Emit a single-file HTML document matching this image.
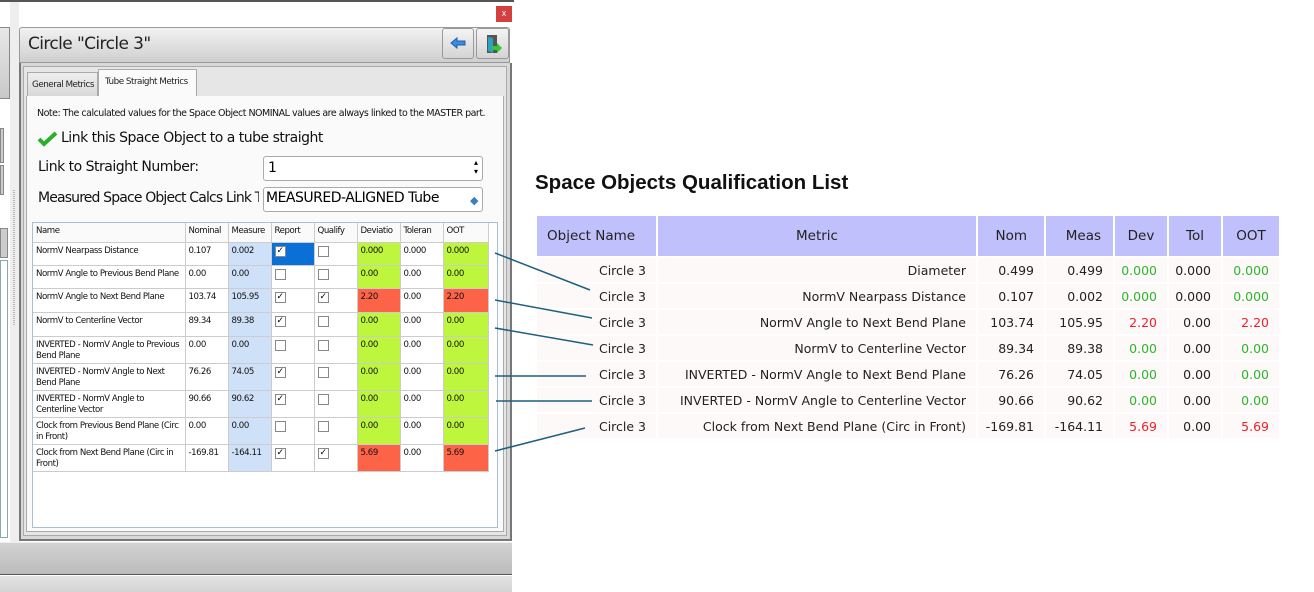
<!DOCTYPE html>
<html><head><meta charset="utf-8"><style>
*{margin:0;padding:0;box-sizing:border-box}
body{width:1314px;height:592px;background:#fff;position:relative;overflow:hidden;font-family:"Liberation Sans",sans-serif}
.a{position:absolute}
.t{font-family:"DejaVu Sans",sans-serif;font-size:9.5px;color:#111;letter-spacing:-0.5px;white-space:nowrap}
.g td{border-right:1px solid #ccc;border-bottom:1px solid #ccc;padding:3px 2px 0 3px;vertical-align:top;font-family:"DejaVu Sans",sans-serif;font-size:8.6px;letter-spacing:-0.45px;line-height:11px;color:#111;overflow:hidden}
.g tr.s td{white-space:nowrap}
.cb{display:inline-block;width:11px;height:11px;border:1px solid #888;background:#fff;font-size:9px;line-height:9px;text-align:center;color:#000}
.q td{font-family:"DejaVu Sans",sans-serif;font-size:12.5px;color:#222;text-align:right;padding:0 10px 0 0;background:#fdf9f9;height:24px}
.q th{font-family:"DejaVu Sans",sans-serif;font-size:13.5px;font-weight:normal;color:#222;background:#c0c0fc;height:40px}
.gr{color:#2db52d!important}.rd{color:#f0202a!important}
</style></head><body>
<div class="a" style="left:0;top:0;width:514px;height:2px;background:#555"></div>
<div class="a" style="left:496px;top:6px;width:16px;height:16px;background:#d24040;color:#fff;font-size:9px;text-align:center;line-height:15px">x</div>
<div class="a" style="left:0;top:27px;width:10px;height:72px;background:linear-gradient(#e8e8e8,#c8c8c8);border:1px solid #888;border-left:none"></div>
<div class="a" style="left:0;top:128px;width:4px;height:35px;background:#ccc;border:1px solid #888"></div>
<div class="a" style="left:0;top:165px;width:4px;height:30px;background:#ccc;border:1px solid #888"></div>
<div class="a" style="left:0;top:228px;width:8px;height:30px;background:#ccc;border:1px solid #888"></div>
<div class="a" style="left:0;top:260px;width:8px;height:278px;background:#fff;border:1px solid #8aa"></div>
<div class="a" style="left:10px;top:2px;width:9px;height:540px;background:#eee"></div>
<div class="a" style="left:13px;top:190px;width:2px;height:135px;background:repeating-linear-gradient(#bbb 0 1px,#eee 1px 2px)"></div>
<div class="a" style="left:19px;top:27px;width:491px;height:36px;background:linear-gradient(#f2f2f2,#cfcfcf);border:1px solid #999;border-radius:3px 3px 0 0"></div>
<div class="a" style="left:28px;top:34px;font-size:17px;color:#222;font-family:'DejaVu Sans',sans-serif;letter-spacing:-0.6px">Circle "Circle 3"</div>
<div class="a" style="left:442px;top:28px;width:32px;height:31px;background:linear-gradient(#f4f4f4,#d4d4d4);border:1px solid #999;border-radius:3px"><svg width="30" height="29"><path d="M8 14 L14 9 L14 12 L22 12 L22 16 L14 16 L14 19 Z" fill="#3a8ee0" stroke="#1f5fa8"/></svg></div>
<div class="a" style="left:476px;top:28px;width:33px;height:31px;background:linear-gradient(#f4f4f4,#d4d4d4);border:1px solid #999;border-radius:3px"><svg width="31" height="29"><path d="M10 6 L20 6 L20 24 L10 24 Z" fill="#555"/><path d="M11 8 L16 9 L16 24 L11 22 Z" fill="#2aa3c0"/><path d="M15 17 L20 17 L20 14 L25 19 L20 24 L20 21 L15 21Z" fill="#3ac43a"/></svg></div>
<div class="a" style="left:19px;top:63px;width:493px;height:478px;background:#d8d8d8;border:2px solid #777;border-top:none"></div>
<div class="a" style="left:23px;top:66px;width:484px;height:470px;background:#e6e6e6;border:1px solid #aaa"></div>
<div class="a" style="left:27px;top:72px;width:71px;height:24px;background:linear-gradient(#eee,#d8d8d8);border:1px solid #aaa;border-bottom:none;font-size:8.8px;letter-spacing:-0.5px;padding:7px 0 0 4px;font-family:'DejaVu Sans',sans-serif;color:#222;white-space:nowrap;overflow:hidden">General Metrics</div>
<div class="a" style="left:98px;top:69px;width:99px;height:27px;background:#fafafa;border:1px solid #aaa;border-bottom:none;font-size:8.8px;letter-spacing:-0.5px;padding:7px 0 0 6px;font-family:'DejaVu Sans',sans-serif;color:#222;white-space:nowrap;overflow:hidden">Tube Straight Metrics</div>
<div class="a" style="left:26px;top:96px;width:478px;height:436px;background:#fafafa;border:1px solid #aaa;border-top:none"></div>
<div class="a t" style="left:37px;top:108px">Note: The calculated values for the Space Object NOMINAL values are always linked to the MASTER part.</div>
<svg class="a" style="left:37px;top:131px" width="22" height="16"><path d="M2 8 L7 13 L19 2" stroke="#2ab02a" stroke-width="4" fill="none"/></svg>
<div class="a" style="left:61px;top:130px;font-size:14px;color:#111;font-family:'DejaVu Sans',sans-serif;letter-spacing:-0.5px">Link this Space Object to a tube straight</div>
<div class="a" style="left:38px;top:159px;font-size:14px;color:#111;font-family:'DejaVu Sans',sans-serif;letter-spacing:-0.5px">Link to Straight Number:</div>
<div class="a" style="left:263px;top:156px;width:220px;height:25px;background:#fff;border:1px solid #aaa;border-radius:3px;font-size:14px;padding:3px 4px;font-family:'DejaVu Sans',sans-serif">1<span style="position:absolute;right:4px;top:1px;font-size:8px;line-height:9px">▴<br>▾</span></div>
<div class="a" style="left:38px;top:190px;width:221px;overflow:hidden;white-space:nowrap;font-size:14px;color:#111;font-family:'DejaVu Sans',sans-serif;letter-spacing:-0.85px">Measured Space Object Calcs Link To</div>
<div class="a" style="left:263px;top:187px;width:220px;height:25px;background:#fff;border:1px solid #aaa;border-radius:3px;font-size:14px;padding:2px 2px;font-family:'DejaVu Sans',sans-serif;letter-spacing:-0.5px">MEASURED-ALIGNED Tube<span style="position:absolute;right:4px;top:6px;color:#3a7fc0;font-size:11px">◆</span></div>
<div class="a" style="left:32px;top:222px;width:466px;height:306px;background:#fff;border:1px solid #a9bfd6"></div>
<table class="a g" style="left:33px;top:223px;border-collapse:collapse;table-layout:fixed;width:455px">
<colgroup><col style="width:152px"><col style="width:43px"><col style="width:43px"><col style="width:43px"><col style="width:43px"><col style="width:43px"><col style="width:43px"><col style="width:45px"></colgroup>
<tr class="s" style="height:19px;background:#fafafa"><td>Name</td><td>Nominal</td><td>Measure</td><td>Report</td><td>Qualify</td><td>Deviatio</td><td>Toleran</td><td>OOT</td></tr>
<tr class="s" style="height:23px"><td>NormV Nearpass Distance</td><td>0.107</td><td style="background:#cfe1f8">0.002</td><td style="background:#0a6fd6"><span class="cb">✓</span></td><td><span class="cb"></span></td><td style="background:#bdf63c">0.000</td><td>0.000</td><td style="background:#bdf63c">0.000</td></tr>
<tr class="s" style="height:23px"><td>NormV Angle to Previous Bend Plane</td><td>0.00</td><td style="background:#cfe1f8">0.00</td><td><span class="cb"></span></td><td><span class="cb"></span></td><td style="background:#bdf63c">0.00</td><td>0.00</td><td style="background:#bdf63c">0.00</td></tr>
<tr class="s" style="height:24px"><td>NormV Angle to Next Bend Plane</td><td>103.74</td><td style="background:#cfe1f8">105.95</td><td><span class="cb">✓</span></td><td><span class="cb">✓</span></td><td style="background:#fd6347">2.20</td><td>0.00</td><td style="background:#fd6347">2.20</td></tr>
<tr class="s" style="height:24px"><td>NormV to Centerline Vector</td><td>89.34</td><td style="background:#cfe1f8">89.38</td><td><span class="cb">✓</span></td><td><span class="cb"></span></td><td style="background:#bdf63c">0.00</td><td>0.00</td><td style="background:#bdf63c">0.00</td></tr>
<tr style="height:27px"><td>INVERTED - NormV Angle to Previous Bend Plane</td><td>0.00</td><td style="background:#cfe1f8">0.00</td><td><span class="cb"></span></td><td><span class="cb"></span></td><td style="background:#bdf63c">0.00</td><td>0.00</td><td style="background:#bdf63c">0.00</td></tr>
<tr style="height:27px"><td>INVERTED - NormV Angle to Next Bend Plane</td><td>76.26</td><td style="background:#cfe1f8">74.05</td><td><span class="cb">✓</span></td><td><span class="cb"></span></td><td style="background:#bdf63c">0.00</td><td>0.00</td><td style="background:#bdf63c">0.00</td></tr>
<tr style="height:27px"><td>INVERTED - NormV Angle to Centerline Vector</td><td>90.66</td><td style="background:#cfe1f8">90.62</td><td><span class="cb">✓</span></td><td><span class="cb"></span></td><td style="background:#bdf63c">0.00</td><td>0.00</td><td style="background:#bdf63c">0.00</td></tr>
<tr style="height:27px"><td>Clock from Previous Bend Plane (Circ in Front)</td><td>0.00</td><td style="background:#cfe1f8">0.00</td><td><span class="cb"></span></td><td><span class="cb"></span></td><td style="background:#bdf63c">0.00</td><td>0.00</td><td style="background:#bdf63c">0.00</td></tr>
<tr style="height:27px"><td>Clock from Next Bend Plane (Circ in Front)</td><td>-169.81</td><td style="background:#cfe1f8">-164.11</td><td><span class="cb">✓</span></td><td><span class="cb">✓</span></td><td style="background:#fd6347">5.69</td><td>0.00</td><td style="background:#fd6347">5.69</td></tr>
</table>
<div class="a" style="left:0;top:542px;width:512px;height:33px;background:linear-gradient(#d2d2d2,#bcbcbc);border-top:1px solid #eee;border-bottom:1px solid #555"></div>
<div class="a" style="left:0;top:576px;width:512px;height:16px;background:linear-gradient(#e4e4e4,#d4d4d4)"></div>
<div class="a" style="left:535px;top:171px;font-size:20.5px;font-weight:bold;color:#111">Space Objects Qualification List</div>
<table class="a q" style="left:535px;top:214px;border-collapse:separate;border-spacing:2px;table-layout:fixed">
<colgroup><col style="width:119px"><col style="width:318px"><col style="width:66px"><col style="width:67px"><col style="width:52px"><col style="width:52px"><col style="width:56px"></colgroup>
<tr><th style="text-align:left;padding-left:10px">Object Name</th><th>Metric</th><th style="text-align:right;padding-right:17px">Nom</th><th style="text-align:right;padding-right:12px">Meas</th><th>Dev</th><th>Tol</th><th>OOT</th></tr>
<tr><td>Circle 3</td><td>Diameter</td><td>0.499</td><td>0.499</td><td class="gr">0.000</td><td>0.000</td><td class="gr">0.000</td></tr>
<tr><td>Circle 3</td><td>NormV Nearpass Distance</td><td>0.107</td><td>0.002</td><td class="gr">0.000</td><td>0.000</td><td class="gr">0.000</td></tr>
<tr><td>Circle 3</td><td>NormV Angle to Next Bend Plane</td><td>103.74</td><td>105.95</td><td class="rd">2.20</td><td>0.00</td><td class="rd">2.20</td></tr>
<tr><td>Circle 3</td><td>NormV to Centerline Vector</td><td>89.34</td><td>89.38</td><td class="gr">0.00</td><td>0.00</td><td class="gr">0.00</td></tr>
<tr><td>Circle 3</td><td>INVERTED - NormV Angle to Next Bend Plane</td><td>76.26</td><td>74.05</td><td class="gr">0.00</td><td>0.00</td><td class="gr">0.00</td></tr>
<tr><td>Circle 3</td><td>INVERTED - NormV Angle to Centerline Vector</td><td>90.66</td><td>90.62</td><td class="gr">0.00</td><td>0.00</td><td class="gr">0.00</td></tr>
<tr><td>Circle 3</td><td>Clock from Next Bend Plane (Circ in Front)</td><td>-169.81</td><td>-164.11</td><td class="rd">5.69</td><td>0.00</td><td class="rd">5.69</td></tr>
</table>
<svg class="a" style="left:0;top:0;z-index:5" width="1314" height="592"><g stroke="#1f5f80" stroke-width="1.5" fill="none">
<path d="M495 253 L590 290"/><path d="M495 300 L592 318"/><path d="M495 328 L593 345"/><path d="M495 376 L586 376"/><path d="M496 401 L592 401"/><path d="M495 451 L585 428"/></g></svg>
</body></html>
